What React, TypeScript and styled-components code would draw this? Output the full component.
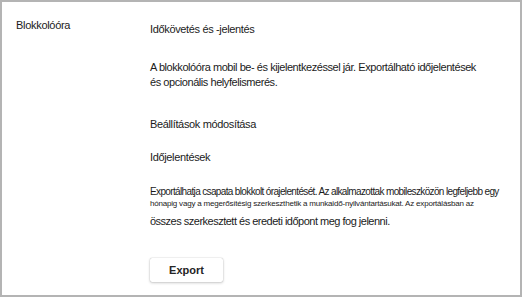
import styled, { createGlobalStyle } from 'styled-components';

const GlobalStyle = createGlobalStyle`
  html, body {
    margin: 0;
    padding: 0;
    background: #ffffff;
  }
  body {
    font-family: "Liberation Sans", Arial, sans-serif;
    color: #1b1b1b;
  }
`

const Frame = styled.div`
  box-sizing: border-box;
  width: 522px;
  height: 297px;
  border: 2px solid #b4b4b4;
  display: flex;
  padding-top: 16px;
`

const Label = styled.div`
  flex: 0 0 148px;
  padding-left: 14px;
  box-sizing: border-box;
  font-size: 11px;
  line-height: 14px;
  letter-spacing: -0.3px;
`

const Content = styled.div`
  display: flex;
  flex-direction: column;
  align-items: flex-start;
  min-width: 0;
`

const Heading = styled.div<{ $top: number }>`
  margin-top: ${p => p.$top}px;
  font-size: 11px;
  line-height: 14px;
  letter-spacing: -0.35px;
  white-space: nowrap;
`

const Para = styled.div<{ $top: number; $size: number; $lh: number; $ls: number }>`
  margin-top: ${p => p.$top}px;
  font-size: ${p => p.$size}px;
  line-height: ${p => p.$lh}px;
  letter-spacing: ${p => p.$ls}px;
  white-space: nowrap;
`

const Button = styled.button`
  margin-top: 30px;
  width: 73px;
  height: 24px;
  border: none;
  border-radius: 2px;
  background: #ffffff;
  box-shadow: 0 0 1px rgba(0, 0, 0, 0.35), 0 1px 3px rgba(0, 0, 0, 0.2);
  font-family: "Liberation Sans", Arial, sans-serif;
  font-size: 11px;
  font-weight: 700;
  color: #252525;
  cursor: pointer;
`

export default function App() {
  return (
    <>
      <GlobalStyle />
      <Frame>
        <Label>Blokkolóóra</Label>
        <Content>
          <Heading $top={4}>Időkövetés és -jelentés</Heading>
          <Para $top={24} $size={11} $lh={15} $ls={-0.44}>
            A blokkolóóra mobil be- és kijelentkezéssel jár. Exportálható időjelentések
            <br />
            és opcionális helyfelismerés.
          </Para>
          <Heading $top={27}>Beállítások módosítása</Heading>
          <Heading $top={19}>Időjelentések</Heading>
          <Para $top={21} $size={10} $lh={13} $ls={-0.64}>
            Exportálhatja csapata blokkolt órajelentését. Az alkalmazottak mobileszközön legfeljebb egy
          </Para>
          <Para $top={0} $size={8} $lh={12} $ls={-0.2}>
            hónapig vagy a megerősítésig szerkeszthetik a munkaidő-nyilvántartásukat. Az exportálásban az
          </Para>
          <Para $top={4} $size={11} $lh={14} $ls={-0.5}>
            összes szerkesztett és eredeti időpont meg fog jelenni.
          </Para>
          <Button>Export</Button>
        </Content>
      </Frame>
    </>
  );
}
